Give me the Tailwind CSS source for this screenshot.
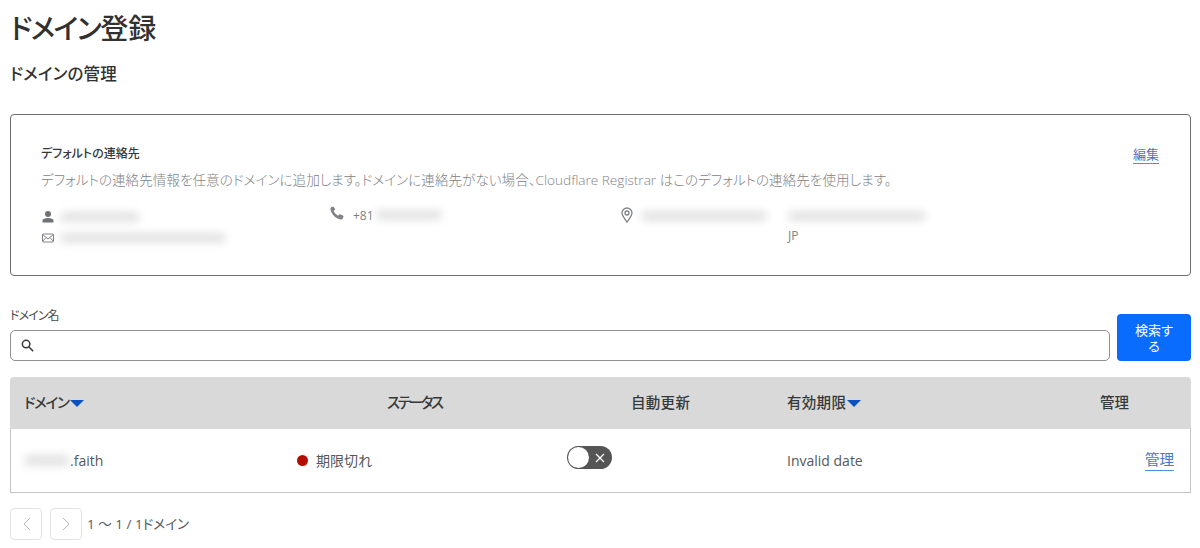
<!DOCTYPE html>
<html lang="ja">
<head>
  <meta charset="UTF-8">
  <title>ドメイン登録</title>
  <script src="https://cdn.jsdelivr.net/npm/@tailwindcss/browser@4"></script>
</head>
<body class="bg-white font-['Open_Sans','Noto_Sans_CJK_JP',sans-serif] text-[#36393a] overflow-hidden">
  <main class="w-[1200px] h-[548px] pl-[10px] pr-[9px] [font-feature-settings:'palt']">
    <!-- 見出し -->
    <h1 class="pt-[8px] h-[50px] text-[28px] leading-[40px] font-medium text-[#313131]"><span class="tracking-[-1.5px]">ドメイン</span>登録</h1>
    <h2 class="pt-[13px] h-[64px] text-[16.500px] leading-[22px] font-medium text-[#313131] tracking-[0.2px]">ドメインの管理</h2>

    <!-- デフォルトの連絡先 -->
    <section class="h-[162px] border border-[#6e6e6e] rounded-[4px] pl-[30px] pr-[31px] pt-[29px]">
      <div class="flex justify-between">
        <div>
          <h3 class="text-[12px] leading-[20px] font-medium">デフォルトの連絡先</h3>
          <p class="mt-[6px] text-[13.600px] leading-[20px] font-light text-[#808285]">デフォルトの連絡先情報を任意のドメインに追加します。ドメインに連絡先がない場合、Cloudflare Registrar はこのデフォルトの連絡先を使用します。</p>
        </div>
        <a href="#" class="text-[13px] leading-[18px] h-[19px] mt-[1px] text-[#4a78c2] border-b border-[#4a90e2]">編集</a>
      </div>
      <div class="grid grid-cols-[289px_291px_1fr] mt-[16px] text-[12px] text-[#808285]">
        <div>
          <div class="flex items-center h-[21px] gap-[5px]">
            <svg class="w-[14px] h-[14px]" viewBox="0 0 14 14" fill="#6f7275"><circle cx="7" cy="4" r="3"/><path d="M1.500 12.500v-1.600C1.500 8.900 4.500 8 7 8s5.500.9 5.500 2.900v1.600z"/></svg>
            <div class="w-[80px] h-[10px] bg-[#e2e2e2] rounded-full blur-[4px]"></div>
          </div>
          <div class="flex items-center h-[21px] gap-[5px]">
            <svg class="w-[14px] h-[14px]" viewBox="0 0 14 14" fill="none" stroke="#808285"><rect x="1.500" y="3" width="11" height="8" rx="1"/><path d="M1.500 3.500 7 8l5.500-4.500M1.500 10.500 5 6.500M12.500 10.500 9 6.500"/></svg>
            <div class="w-[166px] h-[10px] bg-[#e2e2e2] rounded-full blur-[4px]"></div>
          </div>
        </div>
        <div class="flex items-start h-[21px] gap-[8px] -ml-[1px]">
          <svg class="w-[16px] h-[16px] mt-[-1px]" viewBox="0 0 24 24" fill="#808285"><path d="M6.600 2.200 3.300 3.500C2.400 4 2 5 2.200 6.200c1.600 8 7.600 14 15.600 15.600 1.200.2 2.200-.2 2.700-1.100l1.300-3.300c.2-.5 0-1-.5-1.300l-4.300-2.300c-.4-.2-.9-.1-1.200.2l-1.900 2c-3-1.300-5.700-4-7-7l2-1.900c.3-.3.400-.8.2-1.200L6.800 2.700c-.1-.3-.1-.5-.2-.5z"/></svg>
          <span class="leading-[20px]">+81</span>
          <div class="w-[66px] h-[10px] bg-[#e2e2e2] rounded-full blur-[4px] -ml-[6px] mt-[4px]"></div>
        </div>
        <div class="flex items-start gap-[8px] mt-[2px]">
          <svg class="w-[12px] h-[16px] mt-[-1px]" viewBox="0 0 12 16" fill="none" stroke="#808285" stroke-width="1.300"><path d="M6 15C3 11 1 8.500 1 6a5 5 0 0 1 10 0c0 2.500-2 5-5 9z"/><circle cx="6" cy="6" r="2"/></svg>
          <div class="w-[126px] h-[10px] bg-[#e2e2e2] rounded-full blur-[4px] mt-[3px]"></div>
          <div class="ml-[13px]">
            <div class="w-[138px] h-[10px] bg-[#e2e2e2] rounded-full blur-[4px] mt-[3px]"></div>
            <div class="mt-[7px] leading-[16px]">JP</div>
          </div>
        </div>
      </div>
    </section>

    <!-- 検索 -->
    <section class="mt-[32px] flex gap-[7px] items-end">
      <div class="flex-1">
        <label class="block text-[12px] leading-[16px] mb-[6px] text-[#4b4b4b] tracking-[-0.9px]">ドメイン名</label>
        <div class="h-[31px] border border-[#8c9094] rounded-[5px] flex items-center pl-[9px]">
          <svg class="w-[15px] h-[15px]" viewBox="0 0 16 16" fill="none" stroke="#36393a" stroke-width="1.600"><circle cx="6.500" cy="6.500" r="4"/><path d="m9.500 9.500 4.500 4.500"/></svg>
        </div>
      </div>
      <button class="w-[74px] h-[47px] bg-[#0a6cff] text-white text-[13px] leading-[16px] rounded-[4px] px-[16px]">検索する</button>
    </section>

    <!-- ドメイン一覧 -->
    <section class="mt-[16px]">
      <div class="grid grid-cols-[277px_270px_220px_273px_1fr] h-[52px] items-center bg-[#d9d9d9] rounded-t-[4px] text-[14.500px] font-medium text-[#36393a]">
        <div class="pl-[14px] flex items-center gap-[1px]"><span class="tracking-[-1.300px]">ドメイン</span><svg class="w-[14px] h-[7px]" viewBox="0 0 14 7" fill="#0a52c4"><path d="M0 0h14L7 7z"/></svg></div>
        <div class="pl-[100px] tracking-[-2.300px]">ステータス</div>
        <div class="pl-[74px] tracking-[0.3px]">自動更新</div>
        <div class="pl-[10px] flex items-center gap-[1px]"><span class="tracking-[0.300px]">有効期限</span><svg class="w-[14px] h-[7px]" viewBox="0 0 14 7" fill="#0a52c4"><path d="M0 0h14L7 7z"/></svg></div>
        <div class="pl-[50px]">管理</div>
      </div>
      <div class="grid grid-cols-[277px_270px_220px_273px_1fr] h-[64px] items-center border border-t-0 border-[#c4c4c4] text-[14px] text-[#55585b]">
        <div class="pl-[13px] flex items-center">
          <div class="w-[46px] h-[11px] bg-[#e2e2e2] rounded-full blur-[4px]"></div>.faith
        </div>
        <div class="pl-[9px] flex items-center gap-[8px]"><span class="w-[11px] h-[11px] rounded-full bg-[#b30f00]"></span>期限切れ</div>
        <div class="pl-[9px]">
          <div class="w-[45px] h-[23px] rounded-full bg-[#555] flex items-center justify-between pl-[1px] pr-[7px] -mt-[6px]">
            <span class="w-[21px] h-[21px] rounded-full bg-white"></span>
            <svg class="w-[10px] h-[10px]" viewBox="0 0 10 10" stroke="#fff" stroke-width="1.300"><path d="m1 1 8 8M9 1l-8 8"/></svg>
          </div>
        </div>
        <div class="pl-[9px]">Invalid date</div>
        <div class="flex justify-end pr-[16px]"><a href="#" class="text-[14.500px] text-[#4a78c2] border-b border-[#4a90e2] leading-[20px]">管理</a></div>
      </div>
    </section>

    <!-- ページネーション -->
    <nav class="mt-[15px] flex items-center gap-[8px] text-[13.500px] text-[#55585b]">
      <button class="w-[32px] h-[32px] border border-[#e2e2e2] rounded-[4px] flex items-center justify-center">
        <svg class="w-[9px] h-[14px]" viewBox="0 0 9 14" fill="none" stroke="#b5b5b5"><path d="M8 1 2 7l6 6"/></svg>
      </button>
      <button class="w-[32px] h-[32px] border border-[#e2e2e2] rounded-[4px] flex items-center justify-center">
        <svg class="w-[9px] h-[14px]" viewBox="0 0 9 14" fill="none" stroke="#b5b5b5"><path d="m1 1 6 6-6 6"/></svg>
      </button>
      <span class="-ml-[3px]">1 ～ 1 / 1ドメイン</span>
    </nav>
  </main>
</body>
</html>
